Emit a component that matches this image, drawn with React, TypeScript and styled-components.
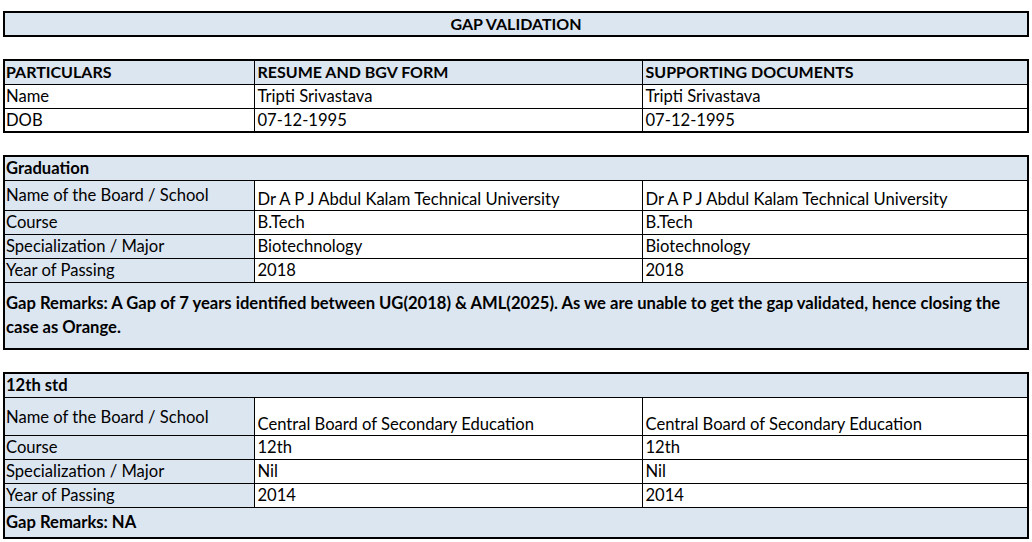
import styled, { createGlobalStyle } from "styled-components";

const GlobalStyle = createGlobalStyle`
  html, body {
    margin: 0;
    padding: 0;
    background: #fff;
  }
  body {
    font-family: Lato, "Liberation Sans", sans-serif;
    font-size: 16.6px;
    color: #000;
  }
`;

const Sheet = styled.div`
  padding: 11px 0 0 3px;
  display: flex;
  flex-direction: column;
  gap: 22px;
  width: 1026px;
`;

const Grid = styled.table`
  width: 1026px;
  border-collapse: collapse;
  table-layout: fixed;
  border: 2px solid #000;
`;

const Row = styled.tr<{ $h?: number }>`
  height: ${({ $h }) => $h ?? 24}px;
`;

const Cell = styled.td<{
  $fill?: boolean;
  $bold?: boolean;
  $caps?: boolean;
  $center?: boolean;
  $valign?: "top" | "middle" | "bottom";
}>`
  border: 1px solid #000;
  padding: 0 3px;
  background: ${({ $fill }) => ($fill ? "#dce6f1" : "#fff")};
  font-weight: ${({ $bold }) => ($bold ? 700 : 400)};
  font-size: ${({ $caps }) => ($caps ? "16px" : "16.6px")};
  text-align: ${({ $center }) => ($center ? "center" : "left")};
  vertical-align: ${({ $valign }) => $valign ?? "middle"};
  line-height: 22px;
  white-space: nowrap;
  overflow: hidden;

  &:first-child {
    padding-left: ${({ $center }) => ($center ? "3px" : "1px")};
  }
`;

const Remark = styled(Cell)`
  white-space: normal;
  line-height: 24px;
`;

interface Field {
  label: string;
  value: string;
  tall?: number;
}

interface Section {
  title: string;
  fields: Field[];
  remark: string;
  remarkHeight: number;
}

const sections: Section[] = [
  {
    title: "Graduation",
    fields: [
      {
        label: "Name of the Board / School",
        value: "Dr A P J Abdul Kalam Technical University",
        tall: 30,
      },
      { label: "Course", value: "B.Tech" },
      { label: "Specialization / Major", value: "Biotechnology" },
      { label: "Year of Passing", value: "2018" },
    ],
    remark:
      "Gap Remarks: A Gap of 7 years identified between UG(2018) & AML(2025). As we are unable to get the gap validated, hence closing the case as Orange.",
    remarkHeight: 67,
  },
  {
    title: "12th std",
    fields: [
      {
        label: "Name of the Board / School",
        value: "Central Board of Secondary Education",
        tall: 38,
      },
      { label: "Course", value: "12th" },
      { label: "Specialization / Major", value: "Nil" },
      { label: "Year of Passing", value: "2014" },
    ],
    remark: "Gap Remarks: NA",
    remarkHeight: 31,
  },
];

const Cols = () => (
  <colgroup>
    <col style={{ width: 250 }} />
    <col style={{ width: 388 }} />
    <col />
  </colgroup>
);

const App = () => {
  return (
    <>
      <GlobalStyle />
      <Sheet>
        <Grid>
          <tbody>
            <Row $h={22}>
              <Cell $fill $bold $caps $center>
                GAP VALIDATION
              </Cell>
            </Row>
          </tbody>
        </Grid>

        <Grid>
          <Cols />
          <tbody>
            <Row>
              <Cell $fill $bold $caps>PARTICULARS</Cell>
              <Cell $fill $bold $caps>RESUME AND BGV FORM</Cell>
              <Cell $fill $bold $caps>SUPPORTING DOCUMENTS</Cell>
            </Row>
            <Row>
              <Cell>Name</Cell>
              <Cell>Tripti Srivastava</Cell>
              <Cell>Tripti Srivastava</Cell>
            </Row>
            <Row>
              <Cell>DOB</Cell>
              <Cell>07-12-1995</Cell>
              <Cell>07-12-1995</Cell>
            </Row>
          </tbody>
        </Grid>

        {sections.map((s) => (
          <Grid key={s.title}>
            <Cols />
            <tbody>
              <Row>
                <Cell $fill $bold colSpan={3}>
                  {s.title}
                </Cell>
              </Row>
              {s.fields.map((f) => (
                <Row key={f.label} $h={f.tall}>
                  <Cell
                    $fill
                    $valign={f.tall ? "top" : "middle"}
                    style={f.tall ? { paddingTop: f.tall > 32 ? 8 : 3 } : undefined}
                  >
                    {f.label}
                  </Cell>
                  <Cell $valign={f.tall ? "bottom" : "middle"}>{f.value}</Cell>
                  <Cell $valign={f.tall ? "bottom" : "middle"}>{f.value}</Cell>
                </Row>
              ))}
              <Row $h={s.remarkHeight}>
                <Remark $fill $bold colSpan={3}>
                  {s.remark}
                </Remark>
              </Row>
            </tbody>
          </Grid>
        ))}
      </Sheet>
    </>
  );
};

export default App;
